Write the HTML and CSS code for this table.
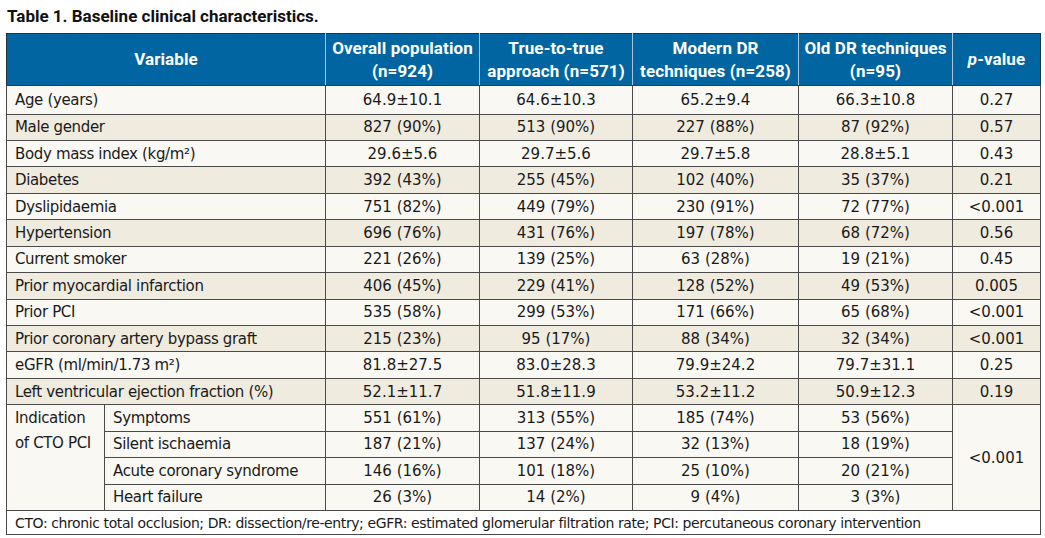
FILE: index.html
```html
<!DOCTYPE html>
<html lang="en">
<head>
<meta charset="utf-8">
<title>Table 1. Baseline clinical characteristics.</title>
<link rel="stylesheet" href="styles.css">
</head>
<body>
<h1 class="title">Table 1. Baseline clinical characteristics.</h1>
<table class="tbl">
  <colgroup>
    <col class="c-sub"><col class="c-var"><col class="c-all"><col class="c-ttt"><col class="c-mod"><col class="c-old"><col class="c-p">
  </colgroup>
  <thead>
    <tr>
      <th colspan="2">Variable</th>
      <th>Overall population<br>(n=924)</th>
      <th>True-to-true<br>approach (n=571)</th>
      <th>Modern DR<br>techniques (n=258)</th>
      <th>Old DR techniques<br>(n=95)</th>
      <th><i>p</i>-value</th>
    </tr>
  </thead>
  <tbody>
    <tr class="lt first"><td colspan="2" class="lbl">Age (years)</td><td>64.9±10.1</td><td>64.6±10.3</td><td>65.2±9.4</td><td>66.3±10.8</td><td>0.27</td></tr>
    <tr class="bg"><td colspan="2" class="lbl">Male gender</td><td>827 (90%)</td><td>513 (90%)</td><td>227 (88%)</td><td>87 (92%)</td><td>0.57</td></tr>
    <tr class="lt"><td colspan="2" class="lbl">Body mass index (kg/m²)</td><td>29.6±5.6</td><td>29.7±5.6</td><td>29.7±5.8</td><td>28.8±5.1</td><td>0.43</td></tr>
    <tr class="bg"><td colspan="2" class="lbl">Diabetes</td><td>392 (43%)</td><td>255 (45%)</td><td>102 (40%)</td><td>35 (37%)</td><td>0.21</td></tr>
    <tr class="lt"><td colspan="2" class="lbl">Dyslipidaemia</td><td>751 (82%)</td><td>449 (79%)</td><td>230 (91%)</td><td>72 (77%)</td><td>&lt;0.001</td></tr>
    <tr class="bg"><td colspan="2" class="lbl">Hypertension</td><td>696 (76%)</td><td>431 (76%)</td><td>197 (78%)</td><td>68 (72%)</td><td>0.56</td></tr>
    <tr class="lt"><td colspan="2" class="lbl">Current smoker</td><td>221 (26%)</td><td>139 (25%)</td><td>63 (28%)</td><td>19 (21%)</td><td>0.45</td></tr>
    <tr class="bg"><td colspan="2" class="lbl">Prior myocardial infarction</td><td>406 (45%)</td><td>229 (41%)</td><td>128 (52%)</td><td>49 (53%)</td><td>0.005</td></tr>
    <tr class="lt"><td colspan="2" class="lbl">Prior PCI</td><td>535 (58%)</td><td>299 (53%)</td><td>171 (66%)</td><td>65 (68%)</td><td>&lt;0.001</td></tr>
    <tr class="bg"><td colspan="2" class="lbl">Prior coronary artery bypass graft</td><td>215 (23%)</td><td>95 (17%)</td><td>88 (34%)</td><td>32 (34%)</td><td>&lt;0.001</td></tr>
    <tr class="lt"><td colspan="2" class="lbl">eGFR (ml/min/1.73 m²)</td><td>81.8±27.5</td><td>83.0±28.3</td><td>79.9±24.2</td><td>79.7±31.1</td><td>0.25</td></tr>
    <tr class="bg"><td colspan="2" class="lbl">Left ventricular ejection fraction (%)</td><td>52.1±11.7</td><td>51.8±11.9</td><td>53.2±11.2</td><td>50.9±12.3</td><td>0.19</td></tr>
    <tr class="lt"><td rowspan="4" class="lbl group">Indication<br>of CTO PCI</td><td class="lbl">Symptoms</td><td>551 (61%)</td><td>313 (55%)</td><td>185 (74%)</td><td>53 (56%)</td><td rowspan="4">&lt;0.001</td></tr>
    <tr class="lt"><td class="lbl">Silent ischaemia</td><td>187 (21%)</td><td>137 (24%)</td><td>32 (13%)</td><td>18 (19%)</td></tr>
    <tr class="lt"><td class="lbl">Acute coronary syndrome</td><td>146 (16%)</td><td>101 (18%)</td><td>25 (10%)</td><td>20 (21%)</td></tr>
    <tr class="lt"><td class="lbl">Heart failure</td><td>26 (3%)</td><td>14 (2%)</td><td>9 (4%)</td><td>3 (3%)</td></tr>
    <tr class="note"><td colspan="7" class="lbl">CTO: chronic total occlusion; DR: dissection/re-entry; eGFR: estimated glomerular filtration rate; PCI: percutaneous coronary intervention</td></tr>
  </tbody>
</table>
</body>
</html>
```
FILE: styles.css
```css
html, body {
  margin: 0;
  padding: 0;
  background: #ffffff;
}

.title {
  margin: 6px 0 0 7px;
  font-family: "Roboto", "Liberation Sans", sans-serif;
  font-weight: bold;
  font-size: 17px;
  line-height: 20px;
  color: #111111;
}

.tbl {
  margin: 7px 0 0 6px;
  width: 1034px;
  table-layout: fixed;
  border-collapse: collapse;
  font-family: "DejaVu Sans", sans-serif;
  font-size: 15px;
  color: #1a1a1a;
}

.c-sub { width: 98px; }
.c-var { width: 221px; }
.c-all { width: 154px; }
.c-ttt { width: 153px; }
.c-mod { width: 166px; }
.c-old { width: 154px; }
.c-p { width: 88px; }

.tbl th {
  height: 51px;
  padding: 0 2px;
  background: #0065a0;
  color: #ffffff;
  font-family: "Roboto", "Liberation Sans", sans-serif;
  font-weight: bold;
  font-size: 17px;
  line-height: 23px;
  letter-spacing: 0.1px;
  text-align: center;
  vertical-align: middle;
  white-space: nowrap;
  border-top: 1px solid #1c3444;
  border-bottom: 1px solid #3a3a3a;
  border-left: 1px solid #a9c6dc;
  border-right: 1px solid #a9c6dc;
}

.tbl th:first-child { border-left: 1px solid #1c3444; }
.tbl th:last-child { border-right: 1px solid #1c3444; }

.tbl td {
  height: 25.45px;
  padding: 0 4px;
  text-align: center;
  vertical-align: middle;
  border: 1px solid #4a4a4a;
  line-height: 18px;
  white-space: nowrap;
}

.tbl tr.first td { height: 27.5px; }

.tbl td.lbl {
  text-align: left;
  padding-left: 8px;
  letter-spacing: -0.35px;
}

.tbl td.group {
  vertical-align: top;
  line-height: 25px;
  padding-top: 1px;
}

.lt { background: #f9f8f3; }
.bg { background: #efebdf; }

.note { background: #ffffff; }
.tbl .note td {
  height: 23px;
  font-size: 14px;
  letter-spacing: -0.4px;
}
```
